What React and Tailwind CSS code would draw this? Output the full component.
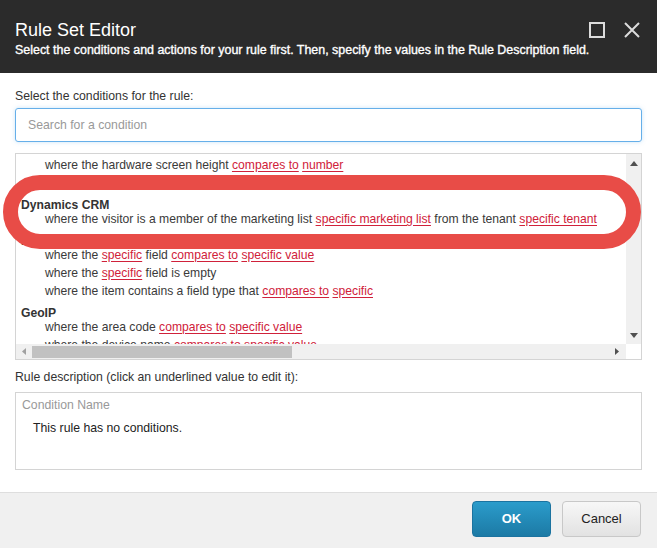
import React from 'react';

const Link = ({ children }) => (
  <span className="text-[#d0213a] underline decoration-[#d0213a] underline-offset-[2px]">{children}</span>
);

const groups = [
  {
    name: null,
    items: [
      <>where the hardware screen height <Link>compares to</Link> <Link>number</Link></>,
      <>where the hardware screen width <Link>compares to</Link> <Link>number</Link></>,
    ],
  },
  {
    name: 'Dynamics CRM',
    items: [
      <>where the visitor is a member of the marketing list <Link>specific marketing list</Link> from the tenant <Link>specific tenant</Link></>,
    ],
  },
  {
    name: 'Fields',
    items: [
      <>where the <Link>specific</Link> field <Link>compares to</Link> <Link>specific value</Link></>,
      <>where the <Link>specific</Link> field is empty</>,
      <>where the item contains a field type that <Link>compares to</Link> <Link>specific</Link></>,
    ],
  },
  {
    name: 'GeoIP',
    items: [
      <>where the area code <Link>compares to</Link> <Link>specific value</Link></>,
      <>where the device name <Link>compares to</Link> <Link>specific value</Link></>,
    ],
  },
];

const ConditionList = () => (
  <div className="relative mt-[11px] h-[207px] border border-[#d4d4d4] bg-white overflow-hidden">
    <div className="flex h-[190px]">
      <div className="flex-1 overflow-hidden pt-[4px] text-[12.15px] text-[#3a3a3a] whitespace-nowrap">
        {groups.map((g, gi) => (
          <div key={gi} className={gi === 0 ? '' : 'mt-[8px]'}>
            {g.name && <div className="pl-[5px] leading-[14px] font-bold text-[#333]">{g.name}</div>}
            {g.items.map((it, ii) => (
              <div key={ii} className={`pl-[29px] leading-[14px] ${ii === 0 ? '' : 'mt-[4px]'}`}>{it}</div>
            ))}
          </div>
        ))}
      </div>
      {/* vertical scrollbar */}
      <div className="w-[15px] bg-[#f0f0f0] flex flex-col justify-between items-center pt-[7px] pb-[6px]">
        <svg width="8" height="5" viewBox="0 0 8 5"><path d="M4 0L8 5H0z" fill="#505050" /></svg>
        <svg width="8" height="5" viewBox="0 0 8 5"><path d="M0 0H8L4 5z" fill="#505050" /></svg>
      </div>
    </div>
    {/* horizontal scrollbar */}
    <div className="flex h-[15px]">
      <div className="flex-1 bg-[#f0f0f0] flex items-center">
        <svg className="ml-[6px]" width="4" height="7" viewBox="0 0 4 7"><path d="M4 0V7L0 3.5z" fill="#a0a0a0" /></svg>
        <div className="ml-[6px] w-[260px] h-[12px] bg-[#c1c1c1]" />
        <div className="flex-1" />
        <svg className="mr-[7px]" width="4" height="7" viewBox="0 0 4 7"><path d="M0 0L4 3.5 0 7z" fill="#505050" /></svg>
      </div>
      <div className="w-[15px] bg-white" />
    </div>
  </div>
);

export default function App() {
  return (
    <div className="relative w-[657px] h-[548px] flex flex-col bg-white overflow-hidden font-['Liberation_Sans',Arial,sans-serif]">
      <div className="h-[73px] bg-[#2b2b2b] px-[15px] pt-[18px] flex justify-between">
        <div>
          <div className="text-[18px] leading-[24px] text-white">Rule Set Editor</div>
          <div className="text-[12.45px] leading-[16px] text-white whitespace-nowrap [-webkit-text-stroke:0.35px_white]">
            Select the conditions and actions for your rule first. Then, specify the values in the Rule Description field.
          </div>
        </div>
        <div className="flex gap-[19px] pt-[4px] pr-[4px]">
          <svg width="16" height="16" viewBox="0 0 16 16"><rect x="1" y="1" width="14" height="14" fill="none" stroke="#dcdcdc" strokeWidth="2" /></svg>
          <svg width="16" height="16" viewBox="0 0 16 16"><path d="M1 1L15 15M15 1L1 15" stroke="#dcdcdc" strokeWidth="2" /></svg>
        </div>
      </div>

      <div className="flex-1 px-[15px] pt-[15px] text-[12.25px]">
        <div className="leading-[16px] text-[#333]">Select the conditions for the rule:</div>
        <div className="mt-[4px] h-[34px] border border-[#66afe9] rounded-[3px] flex items-center px-[12px] text-[#999] shadow-[0_0_4px_rgba(102,175,233,0.35)]">
          Search for a condition
        </div>
        <ConditionList />
        <div className="mt-[9px] leading-[16px] text-[#333]">Rule description (click an underlined value to edit it):</div>
        <div className="mt-[7px] h-[78px] border border-[#d4d4d4] px-[6px] pt-[5px]">
          <div className="leading-[14px] text-[#999]">Condition Name</div>
          <div className="mt-[9px] pl-[11px] leading-[14px] text-[#222]">This rule has no conditions.</div>
        </div>
      </div>

      <div className="h-[56px] bg-[#f0f0f0] border-t border-[#dedede] flex justify-end items-start pt-[8px] pr-[16px] gap-[11px]">
        <button className="w-[79px] h-[36px] rounded-[4px] bg-gradient-to-b from-[#2b9ccb] to-[#1c7aa5] border border-[#1b73a0] text-white text-[13px] font-bold">OK</button>
        <button className="w-[79px] h-[36px] rounded-[4px] bg-gradient-to-b from-[#f7f7f7] to-[#e2e2e2] border border-[#c8c8c8] text-[#222] text-[13px]">Cancel</button>
      </div>

      {/* red highlight annotation */}
      <div className="absolute left-[3px] top-[175px] w-[638px] h-[74px] rounded-[37px] border-[15px] border-[#e84c47] pointer-events-none" />
    </div>
  );
}
